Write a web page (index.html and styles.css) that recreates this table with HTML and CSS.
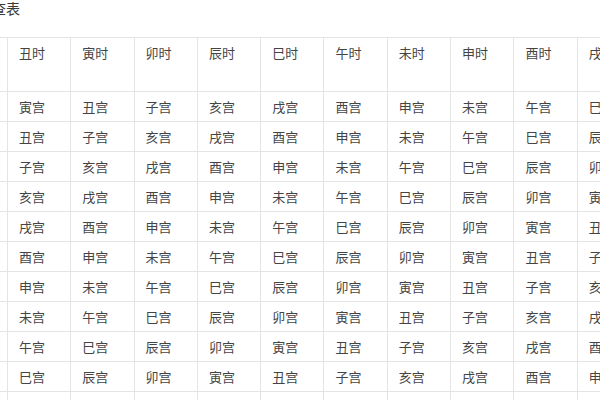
FILE: index.html
```html
<!DOCTYPE html>
<html lang="zh">
<head>
<meta charset="utf-8">
<link rel="stylesheet" href="styles.css">
</head>
<body>
<div class="page">
  <h3 class="title">命宫速查表</h3>
  <table class="grid">
    <colgroup>
      <col><col><col><col><col><col><col><col><col><col><col><col>
    </colgroup>
    <thead>
      <tr>
        <th>子时</th><th>丑时</th><th>寅时</th><th>卯时</th><th>辰时</th><th>巳时</th><th>午时</th><th>未时</th><th>申时</th><th>酉时</th><th>戌时</th><th>亥时</th>
      </tr>
    </thead>
    <tbody>
      <tr><td>卯宫</td><td>寅宫</td><td>丑宫</td><td>子宫</td><td>亥宫</td><td>戌宫</td><td>酉宫</td><td>申宫</td><td>未宫</td><td>午宫</td><td>巳宫</td><td>辰宫</td></tr>
      <tr><td>寅宫</td><td>丑宫</td><td>子宫</td><td>亥宫</td><td>戌宫</td><td>酉宫</td><td>申宫</td><td>未宫</td><td>午宫</td><td>巳宫</td><td>辰宫</td><td>卯宫</td></tr>
      <tr><td>丑宫</td><td>子宫</td><td>亥宫</td><td>戌宫</td><td>酉宫</td><td>申宫</td><td>未宫</td><td>午宫</td><td>巳宫</td><td>辰宫</td><td>卯宫</td><td>寅宫</td></tr>
      <tr><td>子宫</td><td>亥宫</td><td>戌宫</td><td>酉宫</td><td>申宫</td><td>未宫</td><td>午宫</td><td>巳宫</td><td>辰宫</td><td>卯宫</td><td>寅宫</td><td>丑宫</td></tr>
      <tr><td>亥宫</td><td>戌宫</td><td>酉宫</td><td>申宫</td><td>未宫</td><td>午宫</td><td>巳宫</td><td>辰宫</td><td>卯宫</td><td>寅宫</td><td>丑宫</td><td>子宫</td></tr>
      <tr><td>戌宫</td><td>酉宫</td><td>申宫</td><td>未宫</td><td>午宫</td><td>巳宫</td><td>辰宫</td><td>卯宫</td><td>寅宫</td><td>丑宫</td><td>子宫</td><td>亥宫</td></tr>
      <tr><td>酉宫</td><td>申宫</td><td>未宫</td><td>午宫</td><td>巳宫</td><td>辰宫</td><td>卯宫</td><td>寅宫</td><td>丑宫</td><td>子宫</td><td>亥宫</td><td>戌宫</td></tr>
      <tr><td>申宫</td><td>未宫</td><td>午宫</td><td>巳宫</td><td>辰宫</td><td>卯宫</td><td>寅宫</td><td>丑宫</td><td>子宫</td><td>亥宫</td><td>戌宫</td><td>酉宫</td></tr>
      <tr><td>未宫</td><td>午宫</td><td>巳宫</td><td>辰宫</td><td>卯宫</td><td>寅宫</td><td>丑宫</td><td>子宫</td><td>亥宫</td><td>戌宫</td><td>酉宫</td><td>申宫</td></tr>
      <tr><td>午宫</td><td>巳宫</td><td>辰宫</td><td>卯宫</td><td>寅宫</td><td>丑宫</td><td>子宫</td><td>亥宫</td><td>戌宫</td><td>酉宫</td><td>申宫</td><td>未宫</td></tr>
      <tr><td>巳宫</td><td>辰宫</td><td>卯宫</td><td>寅宫</td><td>丑宫</td><td>子宫</td><td>亥宫</td><td>戌宫</td><td>酉宫</td><td>申宫</td><td>未宫</td><td>午宫</td></tr>
    </tbody>
  </table>
</div>
</body>
</html>
```
FILE: styles.css
```css
html, body {
  margin: 0;
  padding: 0;
  background: #ffffff;
  overflow: hidden;
}

.page {
  width: 600px;
  height: 400px;
  overflow: hidden;
  font-family: "Noto Sans CJK SC", "Noto Sans", sans-serif;
  color: #444444;
}

.title {
  margin: 0 0 0 -50px;
  font-size: 14px;
  line-height: 17px;
  font-weight: normal;
  color: #3a3a3a;
  height: 37px;
}

.grid {
  margin-left: -56.3px;
  width: 759.6px;
  table-layout: fixed;
  border-collapse: collapse;
  font-size: 13px;
}

.grid col {
  width: 63.3px;
}

.grid th,
.grid td {
  border: 1px solid #e4e4e4;
  padding: 0 0 0 11px;
  text-align: left;
  font-weight: normal;
  white-space: nowrap;
  overflow: hidden;
}

.grid th {
  height: 54px;
  vertical-align: top;
  padding-top: 6px;
  box-sizing: border-box;
  line-height: 18px;
}

.grid td {
  height: 30px;
  box-sizing: border-box;
  line-height: 18px;
  vertical-align: middle;
}
```
